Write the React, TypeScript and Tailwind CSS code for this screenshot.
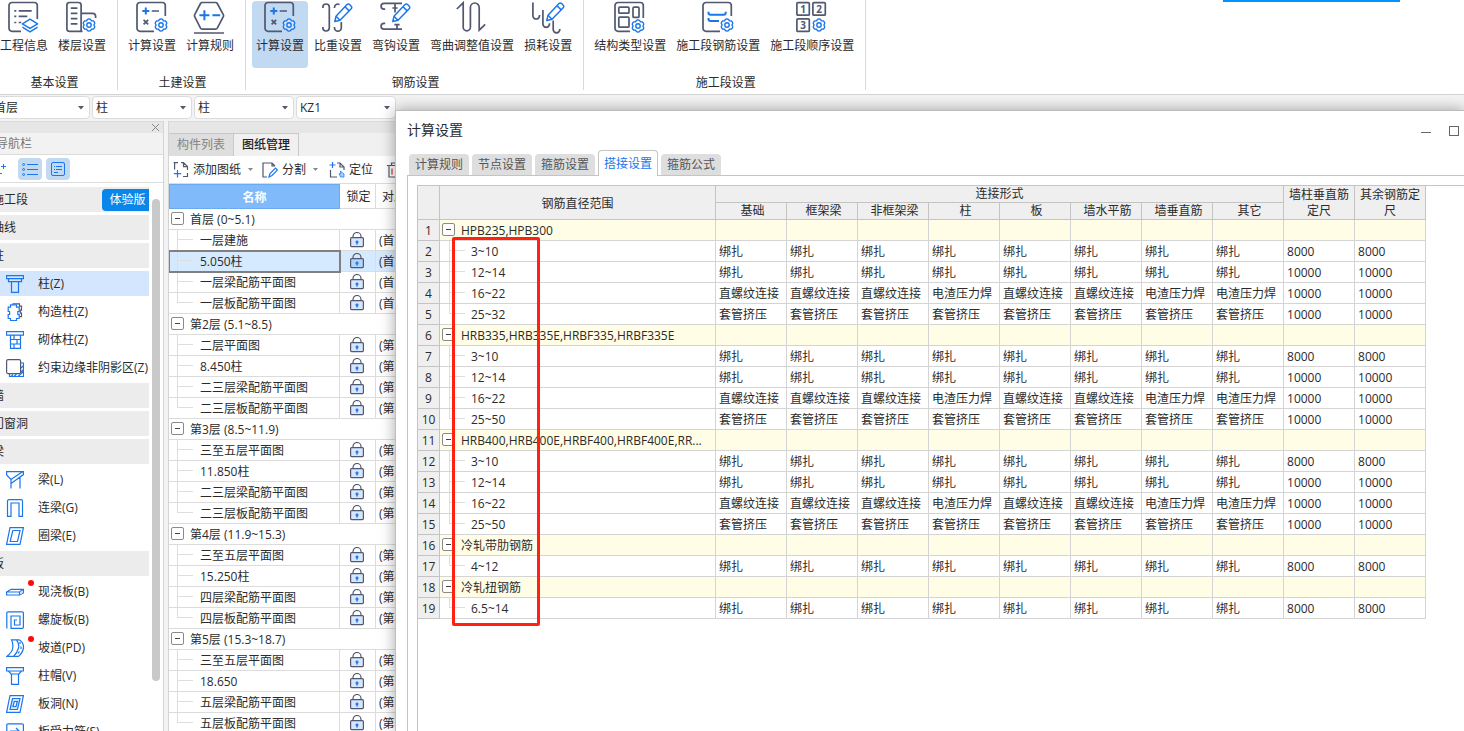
import React, { useState } from 'react';
import clsx from 'clsx';

const DARK = '#515870';
const BLUE = '#1a76ea';

const gearPoints = Array.from({ length: 24 }, (_, i) => {
  const angle = (i / 24) * Math.PI * 2 - Math.PI / 2;
  const radius = [6.2, 5.9, 4.9, 5.9][i % 4];
  return `${(Math.cos(angle) * radius).toFixed(2)},${(Math.sin(angle) * radius).toFixed(2)}`;
}).join(' ');

const Gear = ({ x, y }: { x: number; y: number }) => (
  <g transform={`translate(${x} ${y})`} stroke={BLUE} strokeWidth="1.4" fill="none" strokeLinejoin="round">
    <polygon points={gearPoints} fill="#fff" fillOpacity="0.35" />
    <circle r="2.2" />
  </g>
);

const Pencil = ({ x = 0, y = 0 }: { x?: number; y?: number }) => (
  <g transform={`translate(${x} ${y})`} stroke={BLUE} strokeWidth="1.5" fill="#fff" strokeLinejoin="round">
    <path d="M12.8 20.5l1.2-5.2L25 3.6a1.8 1.8 0 0 1 2.6 0l1.6 1.6a1.8 1.8 0 0 1 0 2.6L18 19.2z" />
    <path d="M14 15.3l4 3.9M23 5.7l4.2 4.2" />
  </g>
);

const frame = 'M18 30.3H4a3 3 0 0 1-3-3V4.5a3 3 0 0 1 3-3h22.3a3 3 0 0 1 3 3V15';

const calcIcon = (
  <>
    <path d={frame} />
    <path d="M15.7 10h7.3M7.6 18.8l4.6 4.6M12.2 18.8l-4.6 4.6" />
    <path d="M6.3 10h7M9.8 6.5v7" stroke={BLUE} strokeWidth="2" />
    <Gear x={25} y={24} />
  </>
);

const ribbonIcons: Record<string, React.ReactNode> = {
  info: (
    <>
      <path d="M13 30.3H4a3 3 0 0 1-3-3V4.5a3 3 0 0 1 3-3h22.3a3 3 0 0 1 3 3V18" />
      <path d="M6.3 9.8h2M10.7 9.8h13M6.3 15.3h2M10.7 15.3h8.6M6.3 21.5h2M10.7 21.5h2.6" />
      <g stroke={BLUE} strokeWidth="1.5" strokeLinejoin="round">
        <path d="M22 18.2l7.6 4.6-7.6 4.6-7.6-4.6z" />
        <path d="M14.4 26.2l7.6 4.6 7.6-4.6" />
      </g>
    </>
  ),
  floor: (
    <>
      <path d="M16.5 30.3H3.5a2.6 2.6 0 0 1-2.6-2.6V4.1a2.6 2.6 0 0 1 2.6-2.6h9a2.6 2.6 0 0 1 2.6 2.6v26M15.1 12.3h11.5a3 3 0 0 1 3 3v1.6" />
      <path d="M4.8 7.2h6.6M4.8 12.4h6.6M4.8 17.6h6.6M4.8 22.8h6.6" />
      <Gear x={23} y={24} />
    </>
  ),
  calc: calcIcon,
  rule: (
    <>
      <path d="M8.2 1.5h13.4a2 2 0 0 1 1.7 1l6 11.2a2 2 0 0 1 0 2l-6 11.5a2 2 0 0 1-1.7 1H8.2a2 2 0 0 1-1.7-1l-5.8-11.5a2 2 0 0 1 0-2l5.8-11.2a2 2 0 0 1 1.7-1zM0 32h30" />
      <path d="M5.4 14.3h10M10.4 9.3v10M18.4 14.3h7.8" stroke={BLUE} strokeWidth="2" />
    </>
  ),
  weight: (
    <>
      <path d="M.9 7V6.2a3.2 3.2 0 0 1 6.4 0v20.6a3.2 3.2 0 0 1-6.4 0V26M12.5 7V6.2a3.2 3.2 0 0 1 5-2.6M12.5 26v.8a3.4 3.4 0 0 0 6.8 0V21" />
      <Pencil />
    </>
  ),
  hook: (
    <>
      <path d="M5.2 8.2H4A2.9 2.9 0 0 1 4 2.4h18M15 2.4v9M12.4 7h5.2M5.2 22.4H4a2.9 2.9 0 0 0 0 5.8h18M17 23.4v4.8M14.4 23.6h5.2" />
      <Pencil />
    </>
  ),
  bend: <path d="M.8 8L7.2 1.8v24.4a3.6 3.6 0 0 0 7.2 0V6.4a4.4 4.4 0 0 1 8.8 0v22.8l6-5.8" />,
  loss: (
    <>
      <path d="M.9 1.5v13.2a3.3 3.3 0 0 0 6.6 0v-.8M10.9 9v14a3.3 3.3 0 0 0 6.6 0v-.8M21.2 19.5v9a3.3 3.3 0 0 0 6.6 0V28" />
      <Pencil x={2} y={-1} />
    </>
  ),
  struct: (
    <>
      <path d="M16 30.3H4a3 3 0 0 1-3-3V4.5a3 3 0 0 1 3-3h22.3a3 3 0 0 1 3 3V17" />
      <rect x="4.8" y="6.2" width="10.2" height="6" rx="1" />
      <rect x="19" y="6.2" width="6" height="10.2" rx="1" />
      <rect x="4.8" y="16.2" width="10.2" height="10" rx="1" />
      <Gear x={24} y={25} />
    </>
  ),
  segment: (
    <>
      <path d={frame} />
      <path d="M6.5 10.8v1a2 2 0 0 0 2 2h13.2a2 2 0 0 0 2-2v-1M6.5 17v1a2 2 0 0 0 2 2H17" stroke={BLUE} strokeWidth="2" />
      <Gear x={25} y={24} />
    </>
  ),
  order: (
    <>
      <rect x=".9" y="1.6" width="12.4" height="12.6" rx="1" />
      <rect x="16.9" y="1.6" width="12.4" height="12.6" rx="1" />
      <rect x=".9" y="17.8" width="12.4" height="12.6" rx="1" />
      <g fill={DARK} stroke="none" fontSize="10" fontWeight="700" textAnchor="middle">
        <text x="7.1" y="11.6">1</text>
        <text x="23.1" y="11.6">2</text>
        <text x="7.1" y="27.8">3</text>
      </g>
      <Gear x={23} y={24} />
    </>
  ),
};

interface RibbonGroup {
  title: string;
  items: { label: string; icon: string; active?: boolean }[];
}

const ribbonGroups: RibbonGroup[] = [
  {
    title: '基本设置',
    items: [
      { label: '工程信息', icon: 'info' },
      { label: '楼层设置', icon: 'floor' },
    ],
  },
  {
    title: '土建设置',
    items: [
      { label: '计算设置', icon: 'calc' },
      { label: '计算规则', icon: 'rule' },
    ],
  },
  {
    title: '钢筋设置',
    items: [
      { label: '计算设置', icon: 'calc', active: true },
      { label: '比重设置', icon: 'weight' },
      { label: '弯钩设置', icon: 'hook' },
      { label: '弯曲调整值设置', icon: 'bend' },
      { label: '损耗设置', icon: 'loss' },
    ],
  },
  {
    title: '施工段设置',
    items: [
      { label: '结构类型设置', icon: 'struct' },
      { label: '施工段钢筋设置', icon: 'segment' },
      { label: '施工段顺序设置', icon: 'order' },
    ],
  },
];

const Ribbon = () => (
  <header className="flex h-[95px] shrink-0 border-b border-[#d4d4d4] bg-white">
    <div className="-ml-2.5 flex">
      {ribbonGroups.map((group) => (
        <section key={group.title} className="flex h-[90px] flex-col border-r border-[#d9d9d9] pl-1.5 pr-[7px] pt-px">
          <div className="flex gap-0.5">
            {group.items.map((item) => (
              <button
                key={item.label}
                className={clsx('flex h-[67px] flex-col items-center rounded-sm px-1', item.active && 'bg-[#c2d9f2]')}
              >
                <svg width="32" height="32" viewBox="0 0 32 32" fill="none" stroke={DARK} strokeWidth="1.7" className="overflow-visible">
                  {ribbonIcons[item.icon]}
                </svg>
                <span className="mt-[5px] whitespace-nowrap leading-4">{item.label}</span>
              </button>
            ))}
          </div>
          <h2 className="mt-[7px] pl-[3px] text-center leading-4">{group.title}</h2>
        </section>
      ))}
    </div>
    <div className="ml-auto mr-16 h-0.5 w-[177px] bg-[#0090ff]" />
  </header>
);

const filters = [
  { name: '楼层', value: '首层' },
  { name: '构件分类', value: '柱' },
  { name: '构件类型', value: '柱' },
  { name: '构件', value: 'KZ1' },
];

const FilterBar = () => (
  <div className="-ml-2.5 flex h-[26px] shrink-0 gap-0.5 pt-px">
    {filters.map((f) => (
      <div key={f.name} className="relative">
        <select
          aria-label={f.name}
          className="h-[23px] w-[100px] appearance-none rounded border border-[#dcdcdc] bg-white pl-[3px]"
        >
          <option>{f.value}</option>
        </select>
        <svg width="6" height="4" className="pointer-events-none absolute right-1.5 top-2.5">
          <path d="M0 0h6L3 3.5z" fill="#555b6b" />
        </svg>
      </div>
    ))}
  </div>
);

const navIcons: Record<string, React.ReactNode> = {
  column: <path d="M.5 .6h17v3h-17zM2.5 3.6v3h13v-3M5.500 6.600v10.800h7V6.600" />,
  tieColumn: (
    <>
      <path d="M7 2.5V.8h6.5v2.4h2v4h-1.2v3h1.2v3.4h-2" stroke={DARK} />
      <path d="M4.5 1.8h6v2.4h2.7v4.3h-1.4v3h1.4v4h-2.7v2h-6v-2H2.2v-4h1.4v-3H2.2V4.200h2.300z" fill="#fff" />
    </>
  ),
  brickColumn: <path d="M.5 .6h17v3.500h-17zM4.500 4.100v13.300h10V4.100M4.500 8.500h10M4.500 13h10M8 4.500v4M11 8.500V13M8 13v4.500" />,
  edge: (
    <>
      <path d="M15 4h2.500v13.500H3.500V15M15 9l2.500-2.500M15 13l2.500-2.500M12 17.500l5.500-5M8 17.500l2.500-2.500M5 17.500l2-2" />
      <rect x=".6" y=".6" width="14" height="14" rx="1.500" stroke={DARK} fill="#fff" />
    </>
  ),
  beam: <path d="M.6 4V.6h16.800v3L5 12.500v5M.6 4L5 8.500 16.500.8M5 8.500v4M14 6.500v11" />,
  linkBeam: <path d="M1.500 17.400V2a1.500 1.500 0 0 1 1.500-1.400h12A1.500 1.500 0 0 1 16.500 2v15.400H13V4H5v13.400z" />,
  ringBeam: <path d="M4 .6h13.400L14 17.400H.600zM6.800 3.500h7.200l-2.500 11H4.200z" />,
  slab: (
    <>
      <path d="M.6 9l4.500-2.700h12.300L13.500 9zM.6 9v3h12.900V9M13.500 12l3.900-2V6.300" />
      <path d="M14 9.200l3-2v2.600l-3 1.700z" fill="#cfe2fc" stroke="none" />
    </>
  ),
  spiral: <path d="M.8 17.500V2A1.200 1.200 0 0 1 2 .8h14.200A1.200 1.200 0 0 1 17.400 2v14.200a1.200 1.200 0 0 1-1.200 1.200H5V5h9v9H8.500V9h2.500" />,
  ramp: (
    <>
      <path d="M5.500 .8H13q4.500 2.500 4.500 7.200t-5 9.400H.800Q6.500 13 6.800 8.500T5.500.8zM10.500 .8q3 4 2 8.200T7.500 17.400" />
      <path d="M14 3v2M15 7.500v2.500M13.500 12.500l-1.500 2" />
    </>
  ),
  cap: <path d="M.6 .6h16.800V4H.600zM2.500 4l2.500 3h8l2.500-3M5.500 7v10.400h7V7" />,
  hole: (
    <>
      <path d="M4 .6h13.400L14 17.400H.600z" />
      <path d="M6.500 3.500h7.500l-2.500 11H4z" fill="#cfe2fc" />
      <path d="M8.300 6.500h3l-1.300 5H7z" fill="#fff" />
    </>
  ),
  rebar: <path d="M.8 17.500V2A1.200 1.200 0 0 1 2 .8h14.200A1.200 1.200 0 0 1 17.400 2v15.500zM4 8h9l-3-3M4 12h10" />,
};

interface NavEntry {
  label: string;
  icon?: string;
  active?: boolean;
  dot?: boolean;
  badge?: string;
}

const navEntries: NavEntry[] = [
  { label: '施工段', badge: '体验版' },
  { label: '轴线' },
  { label: '柱' },
  { label: '柱(Z)', icon: 'column', active: true },
  { label: '构造柱(Z)', icon: 'tieColumn' },
  { label: '砌体柱(Z)', icon: 'brickColumn' },
  { label: '约束边缘非阴影区(Z)', icon: 'edge' },
  { label: '墙' },
  { label: '门窗洞' },
  { label: '梁' },
  { label: '梁(L)', icon: 'beam' },
  { label: '连梁(G)', icon: 'linkBeam' },
  { label: '圈梁(E)', icon: 'ringBeam' },
  { label: '板' },
  { label: '现浇板(B)', icon: 'slab', dot: true },
  { label: '螺旋板(B)', icon: 'spiral' },
  { label: '坡道(PD)', icon: 'ramp', dot: true },
  { label: '柱帽(V)', icon: 'cap' },
  { label: '板洞(N)', icon: 'hole' },
  { label: '板受力筋(S)', icon: 'rebar' },
];

const NavPanel = () => (
  <aside className="flex w-[164px] shrink-0 flex-col overflow-hidden border-r border-[#d4d4d4] bg-white">
    <div className="flex h-3 shrink-0 justify-end border-t border-[#d9d9d9] bg-[#e6e6e6] pr-1">
      <button aria-label="关闭">
        <svg width="7" height="7" stroke="#888">
          <path d="M0 0l7 7M7 0L0 7" />
        </svg>
      </button>
    </div>
    <h2 className="-ml-1 h-[22px] shrink-0 border-b border-[#dcdcdc] bg-[#f2f2f2] leading-[22px] text-[#777]">导航栏</h2>
    <div className="flex h-7 shrink-0 items-center gap-1 border-b border-[#dcdcdc]">
      <button aria-label="添加" className="mr-2">
        <svg width="6" height="12" stroke={BLUE} fill="none">
          <path d="M0 10.500h2M3.500 1v5M1 3.500h5" />
        </svg>
      </button>
      <button aria-label="列表" className="flex h-[22px] w-6 items-center justify-center rounded-sm bg-[#c2d9f2]">
        <svg width="16" height="14" stroke={BLUE} fill="none">
          <path d="M5 2.500h11M5 7.500h11M5 12.500h11" />
          <circle cx="1.600" cy="2.500" r="1" />
          <circle cx="1.600" cy="7.500" r="1" />
          <circle cx="1.600" cy="12.500" r="1" />
        </svg>
      </button>
      <button aria-label="详情" className="flex h-[22px] w-6 items-center justify-center rounded-sm bg-[#c2d9f2]">
        <svg width="16" height="16" stroke={BLUE} fill="none">
          <rect x="1.500" y="1.500" width="13" height="13" rx="1.500" />
          <path d="M4 5.500h1M6 5.500h6M4 8.500h1M6 8.500h6M4 11.500h4" />
        </svg>
      </button>
    </div>
    <div className="flex min-h-0 flex-1 pt-1">
      <ul className="flex w-[149px] shrink-0 flex-col gap-[3px]">
        {navEntries.map((entry) => (
          <li
            key={entry.label}
            className={clsx('flex h-[25px] shrink-0 items-center', !entry.icon && 'bg-[#ececec]', entry.active && 'bg-[#d3e6fd]')}
          >
            {entry.icon ? (
              <button className="flex items-center whitespace-nowrap pl-1.5">
                <span className="relative mr-3.5">
                  <svg width="18" height="18" fill="none" stroke={BLUE} strokeWidth="1.200">
                    {navIcons[entry.icon]}
                  </svg>
                  {entry.dot && <span className="absolute -right-2.5 -top-[3px] size-1.5 rounded-full bg-[#ff0a0a]" />}
                </span>
                {entry.label}
              </button>
            ) : (
              <button className="-ml-2 flex-1 text-left">{entry.label}</button>
            )}
            {entry.badge && (
              <span className="flex h-[22px] w-[47px] items-center justify-center rounded-l-sm bg-[#0a86ea] pl-1 text-white">
                {entry.badge}
              </span>
            )}
          </li>
        ))}
      </ul>
      <div className="ml-[3px] mt-3 h-[482px] w-2 rounded-full bg-[#c9c9c9]" />
    </div>
  </aside>
);

const drawings = [
  { floor: '首层 (0~5.1)', mark: '(首层)', sheets: ['一层建施', '5.050柱', '一层梁配筋平面图', '一层板配筋平面图'] },
  { floor: '第2层 (5.1~8.5)', mark: '(第2层)', sheets: ['二层平面图', '8.450柱', '二三层梁配筋平面图', '二三层板配筋平面图'] },
  { floor: '第3层 (8.5~11.9)', mark: '(第3层)', sheets: ['三至五层平面图', '11.850柱', '二三层梁配筋平面图', '二三层板配筋平面图'] },
  { floor: '第4层 (11.9~15.3)', mark: '(第4层)', sheets: ['三至五层平面图', '15.250柱', '四层梁配筋平面图', '四层板配筋平面图'] },
  { floor: '第5层 (15.3~18.7)', mark: '(第5层)', sheets: ['三至五层平面图', '18.650', '五层梁配筋平面图', '五层板配筋平面图'] },
];

const CollapseBox = () => (
  <button aria-label="折叠" className="flex size-[13px] shrink-0 items-center justify-center rounded-xs border border-[#8a8a8a] bg-white">
    <span className="h-px w-[5px] bg-[#444]" />
  </button>
);

const Branch = ({ last }: { last: boolean }) => (
  <span className="flex h-5 w-4 shrink-0 flex-col">
    <span className="h-2.5 border-b border-l border-[#dedede]" />
    <span className={clsx('h-2.5', !last && 'border-l border-[#dedede]')} />
  </span>
);

const LockIcon = ({ active }: { active: boolean }) => (
  <svg width="14" height="16" viewBox="0 0 14 16" fill="none" stroke={DARK} strokeWidth="1.200">
    <path d="M3 6.600V4.500a4 4 0 0 1 8 0v2.100" />
    <rect x=".6" y="5.600" width="12.800" height="9" rx="1" fill={active ? '#b4d4fb' : '#d6e6fc'} />
    <path d="M7 8.500v4M5.500 10h3" stroke={BLUE} strokeWidth="1.500" />
  </svg>
);

const Caret = () => (
  <svg width="5" height="4" className="mx-[7px]">
    <path d="M0 0h5L2.500 3z" fill="#888" />
  </svg>
);

const DrawingPanel = () => (
  <section className="ml-1 flex min-w-0 flex-1 flex-col overflow-hidden border-l border-[#d4d4d4] bg-white">
    <div className="h-3 shrink-0 border-t border-[#d9d9d9] bg-[#e6e6e6]" />
    <div className="flex h-[23px] shrink-0 bg-[#f0f0f0]">
      <button className="w-[65px] border-r border-t border-[#c9c9c9] bg-[#dedede] text-[#858585]">构件列表</button>
      <button className="w-[65px] border-r border-t border-[#c9c9c9] font-medium text-[#222]">图纸管理</button>
    </div>
    <div className="flex h-7 shrink-0 items-center whitespace-nowrap border-b border-[#dcdcdc] pl-1 pt-px">
      <button className="flex items-center gap-1">
        <svg width="16" height="16" fill="none" stroke={DARK} strokeWidth="1.200">
          <path d="M1.600 7.500V.6H5M8 .6h2.500l4 4V8M10.500 .6v4h4M14.500 11v3.500H10M.6 .6h3" />
          <path d="M4.500 8v7.500M.8 11.700h7.400" stroke={BLUE} />
        </svg>
        添加图纸
      </button>
      <Caret />
      <button className="ml-0.5 flex items-center gap-1">
        <svg width="16" height="16" fill="none" stroke={DARK} strokeWidth="1.200">
          <path d="M5 15H1V1h9l3 3M10 1v3h3" />
          <path d="M7 15l1-3.500 5.500-5.500 2 2-5.500 5.500z" stroke={BLUE} />
        </svg>
        分割
      </button>
      <Caret />
      <button className="ml-1 flex items-center gap-1">
        <svg width="16" height="16" fill="none" stroke={DARK} strokeWidth="1.200">
          <path d="M1.500 8v7H8M8 1h3l4 4v3M11 1v4h4" />
          <path d="M3.500 0v6M.5 3h6" stroke={BLUE} />
          <path d="M11.500 9v3l-1.500-.5 1.500 3.500h3.500v-3z" fill="#a9cdfb" stroke={BLUE} strokeWidth=".7" />
        </svg>
        定位
      </button>
      <button aria-label="删除" className="ml-3.5">
        <svg width="14" height="16" fill="none" stroke={DARK} strokeWidth="1.200">
          <path d="M0 3.500h14M4.500 3V1h5v2M2 4v11h10V4" />
          <path d="M5 6.500v6M9 6.500v6" stroke="#e02b2b" />
        </svg>
      </button>
    </div>
    <table className="w-full table-fixed border-separate border-spacing-0 whitespace-nowrap">
      <colgroup>
        <col className="w-[171px]" />
        <col className="w-9" />
        <col />
      </colgroup>
      <thead>
        <tr className="h-[25px]">
          <th className="border border-[#6aaaf0] bg-[#80bafa] p-0 pt-0.5 font-bold text-white">名称</th>
          <th className="border-b border-r border-[#dcdcdc] p-0 pl-0.5 pt-0.5 font-normal">锁定</th>
          <th className="border-b border-[#dcdcdc] p-0 pl-1.5 pt-0.5 text-left font-normal">对应楼层</th>
        </tr>
      </thead>
      <tbody>
        {drawings.map((group) => (
          <React.Fragment key={group.floor}>
            <tr>
              <td colSpan={3} className="border-b border-[#dcdcdc] p-0">
                <div className="flex h-5 items-center gap-1.5 pb-px pl-0.5">
                  <CollapseBox />
                  <span className="mt-[3px]">{group.floor}</span>
                </div>
              </td>
            </tr>
            {group.sheets.map((sheet, i) => {
              const active = sheet === '5.050柱';
              return (
                <tr key={sheet} className={clsx(active && 'bg-[#d6eaff]')}>
                  <td
                    className={clsx(
                      'border-b border-r border-[#dcdcdc] p-0',
                      active && 'outline-2 -outline-offset-1 outline-[#808080]'
                    )}
                  >
                    <div className="flex h-5 items-center gap-[7px] pl-2">
                      <Branch last={i === group.sheets.length - 1} />
                      <span className="mt-0.5">{sheet}</span>
                    </div>
                  </td>
                  <td className="border-b border-r border-[#dcdcdc] p-0">
                    <div className="flex h-5 items-center justify-center pr-0.5">
                      <LockIcon active={active} />
                    </div>
                  </td>
                  <td className="border-b border-[#dcdcdc] p-0 pl-[3px] pt-0.5">{group.mark}</td>
                </tr>
              );
            })}
          </React.Fragment>
        ))}
      </tbody>
    </table>
  </section>
);

const jointTypes = ['基础', '框架梁', '非框架梁', '柱', '板', '墙水平筋', '墙垂直筋', '其它'];

const lashing = Array(8).fill('绑扎');
const sleeve = Array(8).fill('套管挤压');
const threaded = [
  '直螺纹连接',
  '直螺纹连接',
  '直螺纹连接',
  '电渣压力焊',
  '直螺纹连接',
  '直螺纹连接',
  '电渣压力焊',
  '电渣压力焊',
];

interface JointRow {
  name: string;
  joints?: string[];
  length?: string;
}

const standardRows = (maxRange: string): JointRow[] => [
  { name: '3~10', joints: lashing, length: '8000' },
  { name: '12~14', joints: lashing, length: '10000' },
  { name: '16~22', joints: threaded, length: '10000' },
  { name: maxRange, joints: sleeve, length: '10000' },
];

const jointRows: JointRow[] = [
  { name: 'HPB235,HPB300' },
  ...standardRows('25~32'),
  { name: 'HRB335,HRB335E,HRBF335,HRBF335E' },
  ...standardRows('25~50'),
  { name: 'HRB400,HRB400E,HRBF400,HRBF400E,RR...' },
  ...standardRows('25~50'),
  { name: '冷轧带肋钢筋' },
  { name: '4~12', joints: lashing, length: '8000' },
  { name: '冷轧扭钢筋' },
  { name: '6.5~14', joints: lashing, length: '8000' },
];

const headCell = 'border-b border-r border-[#c4c4c4] bg-[#efefef] p-0 font-normal';

const JointTable = () => (
  <table className="w-[1008px] table-fixed border-separate border-spacing-0 whitespace-nowrap">
    <colgroup>
      <col className="w-[22px]" />
      <col className="w-[276px]" />
      <col span={10} className="w-[71px]" />
    </colgroup>
    <thead className="leading-4">
      <tr>
        <th rowSpan={2} className={headCell} />
        <th rowSpan={2} className={clsx(headCell, 'pt-0.5')}>钢筋直径范围</th>
        <th colSpan={8} className={headCell}>连接形式</th>
        <th rowSpan={2} className={clsx(headCell, 'whitespace-normal px-1')}>墙柱垂直筋定尺</th>
        <th rowSpan={2} className={clsx(headCell, 'whitespace-normal px-1')}>其余钢筋定尺</th>
      </tr>
      <tr>
        {jointTypes.map((type) => (
          <th key={type} className={clsx(headCell, 'pl-[3px]')}>{type}</th>
        ))}
      </tr>
    </thead>
    <tbody>
      {jointRows.map((row, i) => {
        const isGroup = !row.joints;
        const last = !jointRows[i + 1]?.joints;
        const cell = 'border-b border-r border-[#d4d4d4] p-0 pl-[3px] pt-0.5';
        return (
          <tr key={i} className={clsx(isGroup && 'bg-[#fffde6]')}>
            <th className={clsx(headCell, 'pt-0.5')}>{i + 1}</th>
            <td className="border-b border-r border-[#d4d4d4] p-0">
              {isGroup ? (
                <div className="flex h-5 items-center gap-1.5 pb-px pl-0.5">
                  <CollapseBox />
                  <span className="mt-[3px]">{row.name}</span>
                </div>
              ) : (
                <div className="flex h-5 items-center gap-1.5 pl-[9px]">
                  <Branch last={last} />
                  <span className="mt-0.5">{row.name}</span>
                </div>
              )}
            </td>
            {(row.joints ?? Array(8).fill('')).map((joint, j) => (
              <td key={j} className={cell}>{joint}</td>
            ))}
            <td className={cell}>{row.length}</td>
            <td className={cell}>{row.length}</td>
          </tr>
        );
      })}
    </tbody>
  </table>
);

const dialogTabs = ['计算规则', '节点设置', '箍筋设置', '搭接设置', '箍筋公式'];

const SettingsDialog = () => {
  const [tab, setTab] = useState('搭接设置');

  return (
    <div
      role="dialog"
      aria-label="计算设置"
      className="absolute bottom-0 left-[395px] right-0 top-[110px] flex flex-col overflow-hidden border-l border-t border-[#bdbdbd] bg-white pl-[11px] shadow-[0_0_14px_rgba(0,0,0,0.35)]"
    >
      <div className="flex h-[39px] shrink-0 items-center justify-between pr-[5px]">
        <h1 className="mb-0.5 text-sm">计算设置</h1>
        <div className="flex items-center gap-[18px]">
          <button aria-label="最小化" className="mt-1 h-px w-2.5 bg-[#666]" />
          <button aria-label="最大化" className="size-2.5 border border-[#666]" />
        </div>
      </div>
      <div className="flex shrink-0 items-end gap-[3px] pl-0.5">
        {dialogTabs.map((name) => (
          <button
            key={name}
            onClick={() => setTab(name)}
            className={clsx(
              'w-[60px] rounded-t',
              name === tab
                ? 'z-10 -mb-px h-[26px] border border-b-0 border-[#c4c4c4] bg-white text-[#1a76ea]'
                : 'h-[21px] bg-[#dedede] text-[#555]'
            )}
          >
            {name}
          </button>
        ))}
      </div>
      <div className="min-h-0 flex-1 border-l border-t border-[#c4c4c4] pl-[9px] pt-[9px]">
        <div className="relative h-full border-l border-t border-[#c4c4c4]">
          <JointTable />
          <div className="pointer-events-none absolute left-[34px] top-[51px] h-[389px] w-[88px] rounded-xs border-3 border-[#ff2112]" />
        </div>
      </div>
    </div>
  );
};

const App = () => (
  <div className="relative flex h-screen flex-col overflow-hidden bg-[#f3f3f3] font-['Open_Sans','Noto_Sans_CJK_SC',sans-serif] text-xs text-[#2b2b2b]">
    <Ribbon />
    <FilterBar />
    <main className="flex min-h-0 flex-1">
      <NavPanel />
      <DrawingPanel />
    </main>
    <SettingsDialog />
  </div>
);

export default App;
